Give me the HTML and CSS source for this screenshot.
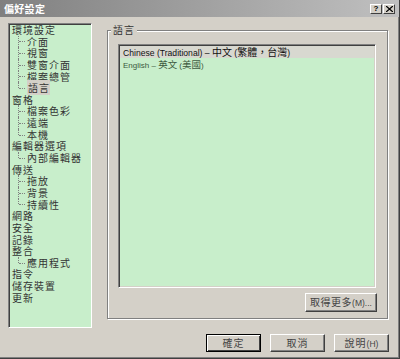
FILE: index.html
```html
<!DOCTYPE html>
<html>
<head>
    <meta charset="utf-8">
    <title>偏好設定</title>
    <link rel="stylesheet" href="styles.css">
</head>
<body>
    <div class="window">
        <div class="titlebar">
            <span class="title">偏好設定</span>
            <div class="caption-buttons">
                <span class="cap">?</span>
                <span class="cap">
                    <svg width="7" height="6" viewBox="0 0 7 6"><path d="M0 0L7 6M7 0L0 6" stroke="#000" stroke-width="1.3"/></svg>
                </span>
            </div>
        </div>

        <div class="main">
            <ul class="tree">
                <li class="node">環境設定</li>
                <li class="leaf">介面</li>
                <li class="leaf">視窗</li>
                <li class="leaf">雙窗介面</li>
                <li class="leaf">檔案總管</li>
                <li class="leaf last"><span class="selected">語言</span></li>
                <li class="node">窗格</li>
                <li class="leaf">檔案色彩</li>
                <li class="leaf">遠端</li>
                <li class="leaf last">本機</li>
                <li class="node">編輯器選項</li>
                <li class="leaf last">內部編輯器</li>
                <li class="node">傳送</li>
                <li class="leaf">拖放</li>
                <li class="leaf">背景</li>
                <li class="leaf last">持續性</li>
                <li class="node">網路</li>
                <li class="node">安全</li>
                <li class="node">記錄</li>
                <li class="node">整合</li>
                <li class="leaf last">應用程式</li>
                <li class="node">指令</li>
                <li class="node">儲存裝置</li>
                <li class="node">更新</li>
            </ul>

            <fieldset class="group">
                <legend>語言</legend>
                <div class="listbox">
                    <div class="item active"><span class="lat">Chinese (Traditional) – </span>中文 <span class="lat">(</span>繁體，台灣<span class="lat">)</span></div>
                    <div class="item"><span class="lat">English – </span>英文 <span class="lat">(</span>美國<span class="lat">)</span></div>
                </div>
                <div class="group-actions">
                    <button class="btn more">取得更多<span class="lat">(M)...</span></button>
                </div>
            </fieldset>
        </div>

        <div class="footer">
            <button class="btn default">確定</button>
            <button class="btn">取消</button>
            <button class="btn">說明<span class="lat">(H)</span></button>
        </div>
    </div>
</body>
</html>
```

FILE: styles.css
```css
body {
    margin: 0;
    font-family: "Noto Sans CJK TC", "Liberation Sans", sans-serif;
}

.window {
    width: 400px;
    height: 359px;
    box-sizing: border-box;
    background-color: #d4d0c8;
    border-right: 1px solid #404040;
    border-bottom: 1px solid #404040;
    box-shadow: inset -1px -1px #808080;
}

.titlebar {
    height: 17px;
    display: flex;
    align-items: center;
    justify-content: space-between;
    padding: 0 4px 0 4px;
    background: linear-gradient(to right, #808080, #c0c0c0);
}

.title {
    color: #fff;
    font-weight: bold;
    font-size: 10px;
    line-height: 12px;
    letter-spacing: 0.3px;
}

.caption-buttons {
    display: flex;
    gap: 1px;
}

.cap {
    width: 12px;
    height: 10px;
    box-sizing: border-box;
    display: flex;
    align-items: center;
    justify-content: center;
    background-color: #d4d0c8;
    border: 1px solid;
    border-color: #fff #404040 #404040 #fff;
    font-family: "Liberation Sans", sans-serif;
    font-size: 8px;
    font-weight: bold;
    line-height: 8px;
}

.main {
    display: flex;
    align-items: flex-start;
    padding: 6px 0 0 8px;
    gap: 15px;
}

/* tree */
.tree {
    list-style: none;
    margin: 0;
    padding: 0 0 0 2px;
    width: 84px;
    height: 305px;
    box-sizing: border-box;
    background-color: #c8eecb;
    border: 1px solid;
    border-color: #808080 #fff #fff #808080;
    box-shadow: inset 1px 1px #404040;
    font-size: 10px;
    letter-spacing: 1px;
    color: #333;
}

.tree li {
    height: 11.65px;
    line-height: 11.65px;
    white-space: nowrap;
}

.tree .node {
    padding-left: 1px;
}

.tree .leaf {
    position: relative;
    padding-left: 16px;
}

.tree .leaf::before {
    content: "";
    position: absolute;
    left: 7px;
    top: 0;
    height: 100%;
    border-left: 1px dotted #808080;
}

.tree .leaf.last::before {
    height: 50%;
}

.tree .leaf::after {
    content: "";
    position: absolute;
    left: 8px;
    top: 50%;
    width: 6px;
    border-top: 1px dotted #808080;
}

.tree .selected {
    background-color: #d4d0c8;
    padding: 0 0 0 1px;
}

/* language group */
.group {
    margin: 1px 0 0 0;
    width: 281px;
    height: 295px;
    box-sizing: border-box;
    padding: 8px 11px 7px 10px;
    border: 1px solid #808080;
    box-shadow: inset 1px 1px #fff, 1px 1px #fff;
}

.group legend {
    margin-left: -7px;
    padding: 0 2px;
    font-size: 10px;
    letter-spacing: 1px;
    line-height: 12px;
    color: #333;
    background-color: #d4d0c8;
}

.listbox {
    height: 244px;
    box-sizing: border-box;
    background-color: #c8eecb;
    border: 1px solid;
    border-color: #808080 #fff #fff #808080;
    box-shadow: inset 1px 1px #404040, inset -1px -1px #d4d0c8;
    padding: 1px 1px 0 1px;
}

.item {
    height: 12px;
    line-height: 12px;
    padding-left: 3px;
    font-size: 9.5px;
    color: #3d5a40;
    white-space: nowrap;
}

.item .lat {
    font-size: 8px;
}

.item.active {
    background-color: #d8d8d0;
    color: #111;
    font-size: 10px;
}

.item.active .lat {
    font-size: 8.6px;
}

.lat {
    font-family: "Liberation Sans", sans-serif;
    font-size: 8.5px;
    letter-spacing: 0;
}

.group-actions {
    display: flex;
    justify-content: flex-end;
    margin: 5px -1px 0 0;
}

/* buttons */
.btn {
    width: 55px;
    height: 18px;
    padding: 0;
    box-sizing: border-box;
    background-color: #d4d0c8;
    border: 1px solid;
    border-color: #fff #404040 #404040 #fff;
    box-shadow: inset -1px -1px #808080;
    font-family: "Noto Sans CJK TC", "Liberation Sans", sans-serif;
    font-size: 10px;
    letter-spacing: 1px;
    line-height: 14px;
    color: #444;
}

.btn.more {
    width: 72px;
    height: 19px;
    letter-spacing: 0.5px;
}

.btn.default {
    border-color: #000;
    box-shadow: inset 1px 1px #fff, inset -1px -1px #404040;
}

.footer {
    display: flex;
    justify-content: flex-end;
    gap: 9px;
    padding: 6px 10px 0 0;
}
```
